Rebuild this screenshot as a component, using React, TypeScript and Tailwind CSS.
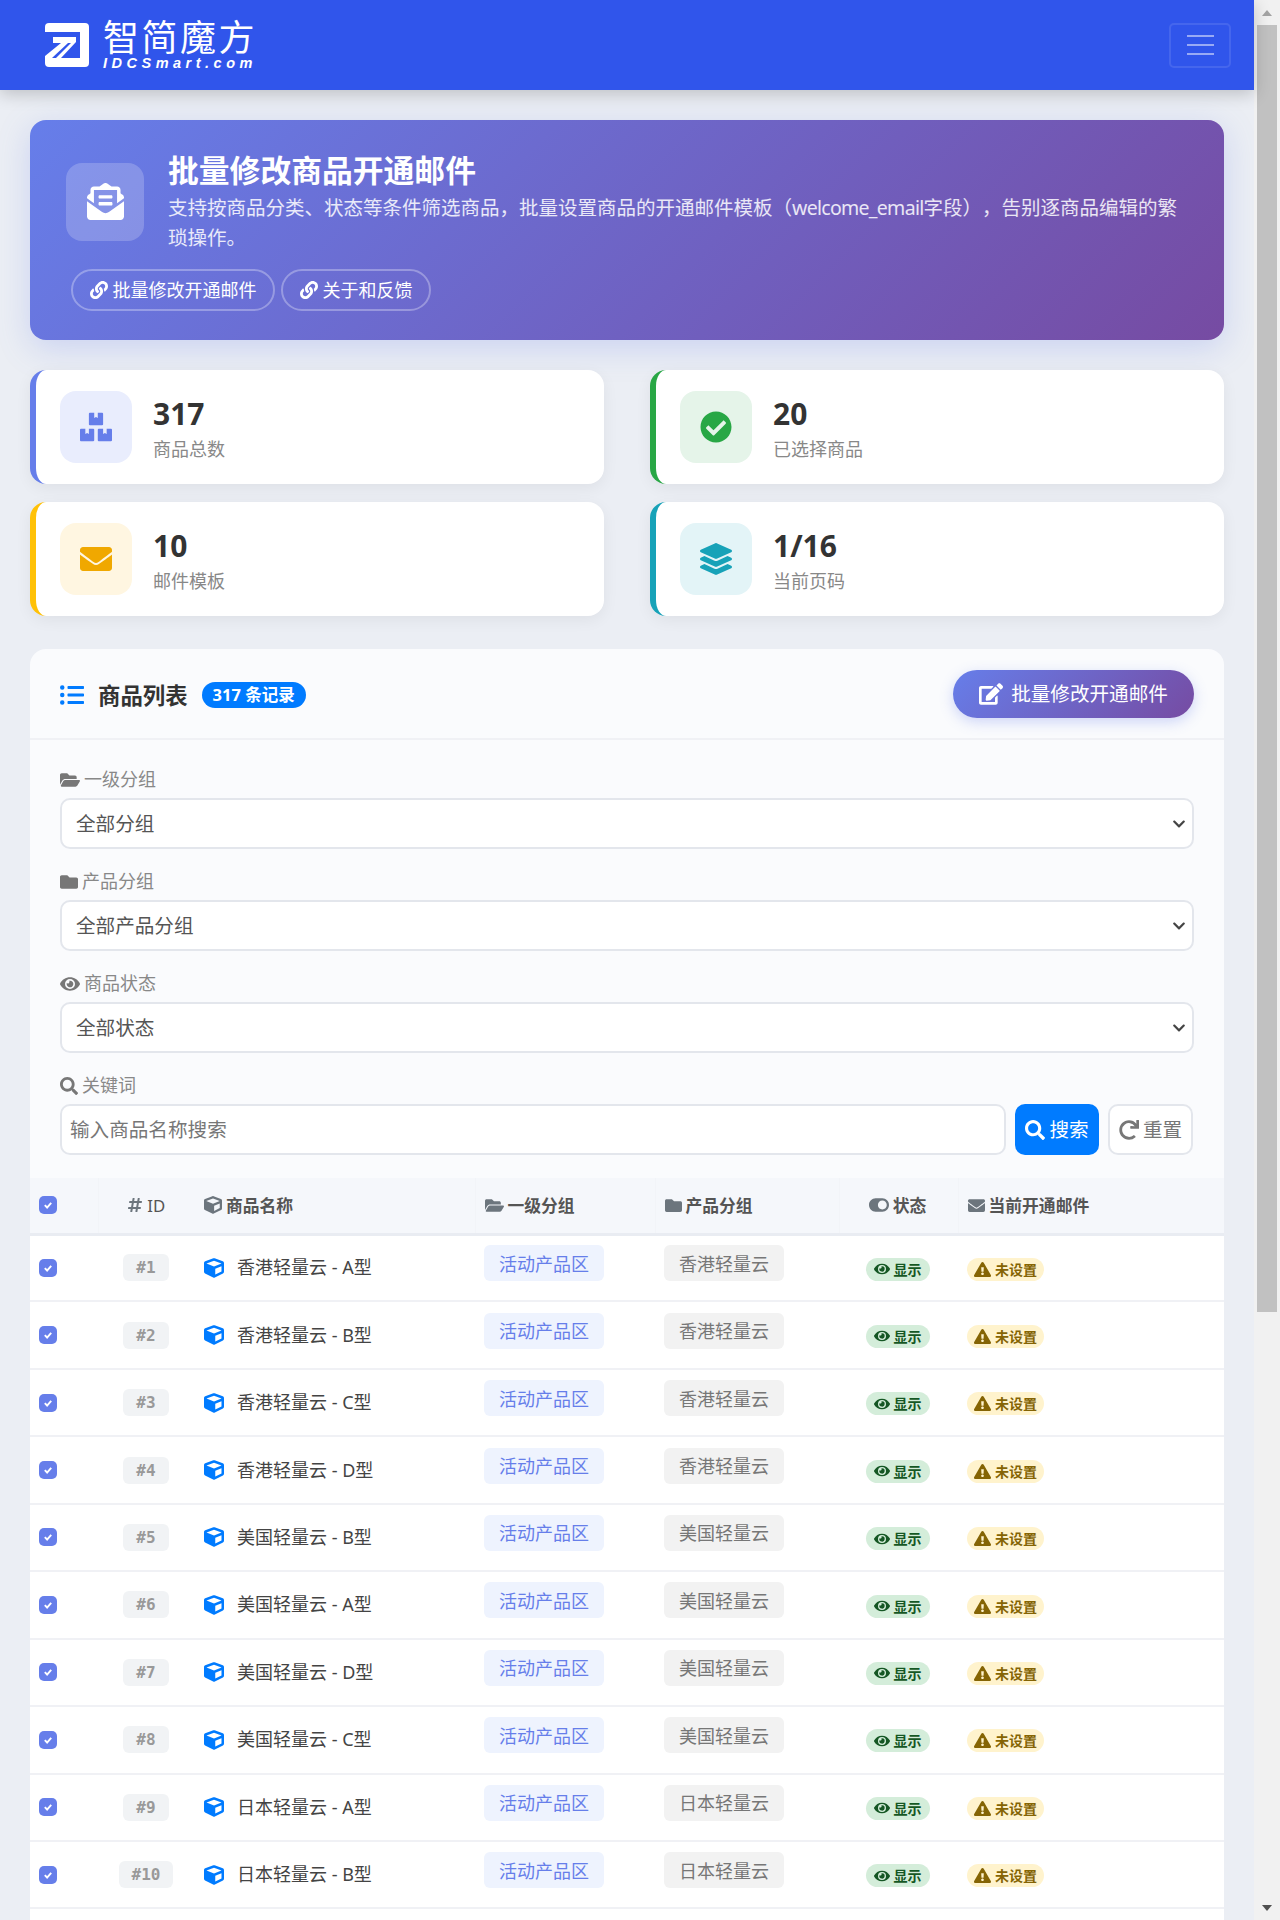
import React from 'react';
import {
  FaBoxes,
  FaCheckCircle,
  FaChevronDown,
  FaCube,
  FaEdit,
  FaEnvelope,
  FaEnvelopeOpenText,
  FaExclamationTriangle,
  FaEye,
  FaFolder,
  FaFolderOpen,
  FaHashtag,
  FaLayerGroup,
  FaLink,
  FaListUl,
  FaRedo,
  FaSearch,
  FaToggleOn,
} from 'react-icons/fa';

const FONT = "font-['Noto_Sans','Noto_Sans_CJK_SC',sans-serif]";

const stats = [
  { value: '317', label: '商品总数', border: 'border-l-[#667eea]', box: 'bg-[#e9edfd]', color: 'text-[#667eea]', icon: FaBoxes },
  { value: '20', label: '已选择商品', border: 'border-l-[#28a745]', box: 'bg-[#e5f4e9]', color: 'text-[#28a745]', icon: FaCheckCircle },
  { value: '10', label: '邮件模板', border: 'border-l-[#ffc107]', box: 'bg-[#fff6e1]', color: 'text-[#f0a800]', icon: FaEnvelope },
  { value: '1/16', label: '当前页码', border: 'border-l-[#17a2b8]', box: 'bg-[#e3f4f7]', color: 'text-[#17a2b8]', icon: FaLayerGroup },
];

const products = [
  { id: 1, name: '香港轻量云 - A型', group: '香港轻量云' },
  { id: 2, name: '香港轻量云 - B型', group: '香港轻量云' },
  { id: 3, name: '香港轻量云 - C型', group: '香港轻量云' },
  { id: 4, name: '香港轻量云 - D型', group: '香港轻量云' },
  { id: 5, name: '美国轻量云 - B型', group: '美国轻量云' },
  { id: 6, name: '美国轻量云 - A型', group: '美国轻量云' },
  { id: 7, name: '美国轻量云 - D型', group: '美国轻量云' },
  { id: 8, name: '美国轻量云 - C型', group: '美国轻量云' },
  { id: 9, name: '日本轻量云 - A型', group: '日本轻量云' },
  { id: 10, name: '日本轻量云 - B型', group: '日本轻量云' },
];

const filters = [
  { label: '一级分组', icon: FaFolderOpen, iconClass: 'h-[20px] w-[20px]', value: '全部分组' },
  { label: '产品分组', icon: FaFolder, iconClass: 'h-[18px] w-[18px]', value: '全部产品分组' },
  { label: '商品状态', icon: FaEye, iconClass: 'h-[20px] w-[20px]', value: '全部状态' },
];

const Checkbox = () => (
  <span className="flex h-[18px] w-[18px] items-center justify-center rounded-[5px] bg-[#667eea]">
    <svg viewBox="0 0 12 12" className="h-3 w-3">
      <path d="M2.8 6.2 5.1 8.5 9.2 3.8" fill="none" stroke="white" strokeWidth="1.9" />
    </svg>
  </span>
);

const Logo = () => (
  <div className="flex items-center gap-[14px]">
    <svg viewBox="0 0 44 44" className="h-11 w-11">
      <rect width="44" height="44" rx="4" fill="white" />
      <path fill="#3055eb" d="M0 9H35V35H16L31 19V14H8V20H16L0 33Z" />
      <path fill="#3055eb" d="M23 20H26L11 35H7Z" />
    </svg>
    <div className="flex flex-col text-white">
      <span className="text-[36px] leading-[36px] tracking-[2.5px] whitespace-nowrap">智简魔方</span>
      <span className="font-['Liberation_Sans'] text-[14.5px] leading-[15px] font-bold tracking-[4.5px] whitespace-nowrap italic">IDCSmart.com</span>
    </div>
  </div>
);

export default function App() {
  return (
    <div className={`flex h-[1920px] w-[1280px] overflow-hidden bg-[#ebeef4] ${FONT}`}>
      <div className="w-[1254px] shrink-0">
        {/* Navbar */}
        <nav className="relative z-10 flex h-[90px] items-center justify-between bg-[#3055eb] pr-[23px] pl-[45px] shadow-[0_4px_16px_rgba(0,0,0,0.2)]">
          <Logo />
          <button className="flex h-[45px] w-[62px] flex-col items-center justify-center gap-[7px] rounded-[5px] border-2 border-white/10">
            <span className="h-[2px] w-[27px] bg-white/50" />
            <span className="h-[2px] w-[27px] bg-white/50" />
            <span className="h-[2px] w-[27px] bg-white/50" />
          </button>
        </nav>

        <main className="px-[30px] pt-[30px]">
          {/* Hero */}
          <section className="h-[220px] rounded-2xl bg-[linear-gradient(135deg,#667eea,#764ba2)] pt-[30px] pr-[30px] pl-[36px] text-white shadow-[0_8px_32px_rgba(102,126,234,0.25)]">
            <div className="flex items-center gap-6">
              <div className="flex h-[78px] w-[78px] shrink-0 items-center justify-center rounded-2xl bg-white/20">
                <FaEnvelopeOpenText className="h-[37px] w-[37px]" />
              </div>
              <div>
                <h1 className="text-[30.8px] leading-[40px] font-bold">批量修改商品开通邮件</h1>
                <p className="mt-[3px] text-[19.5px] leading-[30px] text-white/85 [text-spacing-trim:space-all]">
                  支持按商品分类、状态等条件筛选商品，批量设置商品的开通邮件模板（<span className="tracking-[-0.7px]">welcome_email</span>字段），告别逐商品编辑的繁琐操作。
                </p>
              </div>
            </div>
            <div className="mt-[16px] ml-[5px] flex gap-[6px]">
              <a className="flex h-[42px] items-center gap-[5px] rounded-full border-2 border-white/30 px-[16.5px] text-[18px]">
                <FaLink className="h-[18px] w-[18px]" />
                批量修改开通邮件
              </a>
              <a className="flex h-[42px] items-center gap-[5px] rounded-full border-2 border-white/30 px-[16.5px] text-[18px]">
                <FaLink className="h-[18px] w-[18px]" />
                关于和反馈
              </a>
            </div>
          </section>

          {/* Stats */}
          <section className="mt-[30px] grid grid-cols-2 gap-x-[46px] gap-y-[18px]">
            {stats.map((s) => {
              const Icon = s.icon;
              return (
                <div
                  key={s.label}
                  className={`flex h-[114px] items-center gap-[21px] rounded-2xl border-l-[6px] bg-white pl-6 shadow-[0_4px_16px_rgba(0,0,0,0.06)] ${s.border}`}
                >
                  <div className={`flex h-[72px] w-[72px] items-center justify-center rounded-2xl ${s.box}`}>
                    <Icon className={`h-[32px] w-[32px] ${s.color}`} />
                  </div>
                  <div className="pt-[4px]">
                    <div className="text-[30px] leading-[40px] font-bold text-[#333]">{s.value}</div>
                    <div className="text-[18px] leading-[30px] text-[#888]">{s.label}</div>
                  </div>
                </div>
              );
            })}
          </section>

          {/* Product list */}
          <section className="mt-[33px] overflow-hidden rounded-t-2xl bg-[#fafbfd]">
            <div className="flex h-[91px] items-center justify-between border-b-2 border-[#f0f1f5] pr-[30px] pl-[30px]">
              <div className="flex items-center pt-[4px]">
                <FaListUl className="h-[24px] w-[24px] text-[#007bff]" />
                <h2 className="ml-[14px] text-[22.4px] font-bold text-[#333]">商品列表</h2>
                <span className="ml-[14px] flex h-[26px] items-center rounded-full bg-[#007bff] px-[11px] text-[16.5px] font-bold text-white">
                  317 条记录
                </span>
              </div>
              <button className="flex h-[48px] w-[241px] items-center justify-center gap-[8px] rounded-full bg-[linear-gradient(135deg,#667eea,#764ba2)] text-[19.6px] text-white shadow-[0_4px_14px_rgba(102,126,234,0.3)]">
                <FaEdit className="h-[24px] w-[24px]" />
                批量修改开通邮件
              </button>
            </div>

            <div className="px-[30px] pt-[23px] pb-[23px]">
              {filters.map((f) => {
                const Icon = f.icon;
                return (
                  <div key={f.label} className="mb-[16px]">
                    <label className="mb-[2px] flex h-[33px] items-center gap-[4px] text-[18px] text-[#888]">
                      <Icon className={`${f.iconClass} text-[#777]`} />
                      {f.label}
                    </label>
                    <div className="relative">
                      <select className="h-[51px] w-full appearance-none rounded-[10px] border-2 border-[#e3e6ec] bg-white pl-[14px] text-[19.6px] text-[#555]">
                        <option>{f.value}</option>
                      </select>
                      <FaChevronDown className="pointer-events-none absolute top-[19px] right-[8px] h-[14px] w-[14px] text-[#444]" />
                    </div>
                  </div>
                );
              })}
              <label className="mb-[2px] flex h-[33px] items-center gap-[4px] text-[18px] text-[#888]">
                <FaSearch className="h-[18px] w-[18px] text-[#777]" />
                关键词
              </label>
              <div className="flex gap-[9px]">
                <input
                  placeholder="输入商品名称搜索"
                  className="h-[51px] w-[946px] rounded-[10px] border-2 border-[#e3e6ec] bg-white pl-[8px] text-[19.6px] placeholder:text-[#777]"
                />
                <button className="flex h-[51px] w-[84px] items-center justify-center gap-[4px] rounded-[10px] bg-[#007bff] text-[19.6px] text-white">
                  <FaSearch className="h-[20px] w-[20px]" />
                  搜索
                </button>
                <button className="flex h-[51px] w-[85px] items-center justify-center gap-[4px] rounded-[10px] border-2 border-[#e3e6ec] bg-white text-[19.6px] text-[#777]">
                  <FaRedo className="h-[20px] w-[20px]" />
                  重置
                </button>
              </div>
            </div>

            <table className="w-full table-fixed border-collapse bg-white">
              <colgroup>
                <col className="w-[68px]" />
                <col className="w-[96px]" />
                <col className="w-[281px]" />
                <col className="w-[180px]" />
                <col className="w-[184px]" />
                <col className="w-[119px]" />
                <col />
              </colgroup>
              <thead>
                <tr className="h-[56px] border-b-[3px] border-[#e9ecf2] bg-[#f5f7fb] text-[16.8px] font-bold text-[#555]">
                  <th className="pl-[9px] text-left">
                    <Checkbox />
                  </th>
                  <th className="border-l border-[#f2f4f8] text-center">
                    <span className="flex items-center justify-center gap-[4px] font-normal">
                      <FaHashtag className="h-[16px] w-[16px] text-[#6c757d]" />
                      ID
                    </span>
                  </th>
                  <th className="pl-[10px] text-left">
                    <span className="flex items-center gap-[4px]">
                      <FaCube className="h-[18px] w-[18px] text-[#6c757d]" />
                      商品名称
                    </span>
                  </th>
                  <th className="border-l border-[#f2f4f8] pl-[9px] text-left">
                    <span className="flex items-center gap-[4px]">
                      <FaFolderOpen className="h-[19px] w-[19px] text-[#6c757d]" />
                      一级分组
                    </span>
                  </th>
                  <th className="border-l border-[#f2f4f8] pl-[9px] text-left">
                    <span className="flex items-center gap-[4px]">
                      <FaFolder className="h-[17px] w-[17px] text-[#6c757d]" />
                      产品分组
                    </span>
                  </th>
                  <th className="border-l border-[#f2f4f8] pr-[2px] text-center">
                    <span className="flex items-center justify-center gap-[4px]">
                      <FaToggleOn className="h-[20px] w-[20px] text-[#6c757d]" />
                      状态
                    </span>
                  </th>
                  <th className="border-l border-[#f2f4f8] pl-[9px] text-left">
                    <span className="flex items-center gap-[4px]">
                      <FaEnvelope className="h-[17px] w-[17px] text-[#6c757d]" />
                      当前开通邮件
                    </span>
                  </th>
                </tr>
              </thead>
              <tbody>
                {products.map((p) => (
                  <tr key={p.id} className="h-[67.44px] border-b-2 border-[#f0f1f5]">
                    <td className="pl-[9px]">
                      <Checkbox />
                    </td>
                    <td className="text-center">
                      <span className="inline-block rounded-[6px] bg-[#f1f3f5] px-[13px] font-['DejaVu_Sans_Mono'] text-[16px] leading-[27px] font-bold text-[#999]">
                        #{p.id}
                      </span>
                    </td>
                    <td className="pl-[10px]">
                      <span className="flex items-center gap-[13px] text-[18px] text-[#444]">
                        <FaCube className="h-[20px] w-[20px] text-[#007bff]" />
                        {p.name}
                      </span>
                    </td>
                    <td className="pl-[9px]">
                      <span className="-mt-[9px] flex h-[36px] w-[120px] items-center justify-center rounded-[6px] bg-[#eef3fe] pt-[2px] text-[18px] text-[#667eea]">
                        活动产品区
                      </span>
                    </td>
                    <td className="pl-[9px]">
                      <span className="-mt-[9px] flex h-[36px] w-[120px] items-center justify-center rounded-[6px] bg-[#f2f2f2] pt-[2px] text-[18px] text-[#777]">
                        {p.group}
                      </span>
                    </td>
                    <td className="pr-[2px] text-center">
                      <span className="inline-flex h-[23px] w-[64px] items-center justify-center gap-[4px] rounded-full bg-[#d4edda] align-middle text-[14px] font-bold text-[#155724]">
                        <FaEye className="h-[16px] w-[16px]" />
                        显示
                      </span>
                    </td>
                    <td className="pl-[9px]">
                      <span className="inline-flex h-[23px] w-[77px] items-center justify-center gap-[4px] rounded-full bg-[#fff3cd] align-middle text-[14px] font-bold text-[#856404]">
                        <FaExclamationTriangle className="h-[17px] w-[17px]" />
                        未设置
                      </span>
                    </td>
                  </tr>
                ))}
                <tr className="h-[20px]">
                  <td colSpan={7} />
                </tr>
              </tbody>
            </table>
          </section>
        </main>
      </div>

      {/* Scrollbar */}
      <aside className="flex w-[26px] shrink-0 flex-col bg-[#f1f1f1]">
        <div className="flex h-[25px] items-center justify-center">
          <span className="h-0 w-0 border-x-[5px] border-b-[6px] border-x-transparent border-b-[#a3a3a3]" />
        </div>
        <div className="ml-[3px] h-[1287px] w-[20px] bg-[#c1c1c1]" />
        <div className="mt-auto flex h-[25px] items-center justify-center">
          <span className="h-0 w-0 border-x-[5px] border-t-[6px] border-x-transparent border-t-[#505050]" />
        </div>
      </aside>
    </div>
  );
}
